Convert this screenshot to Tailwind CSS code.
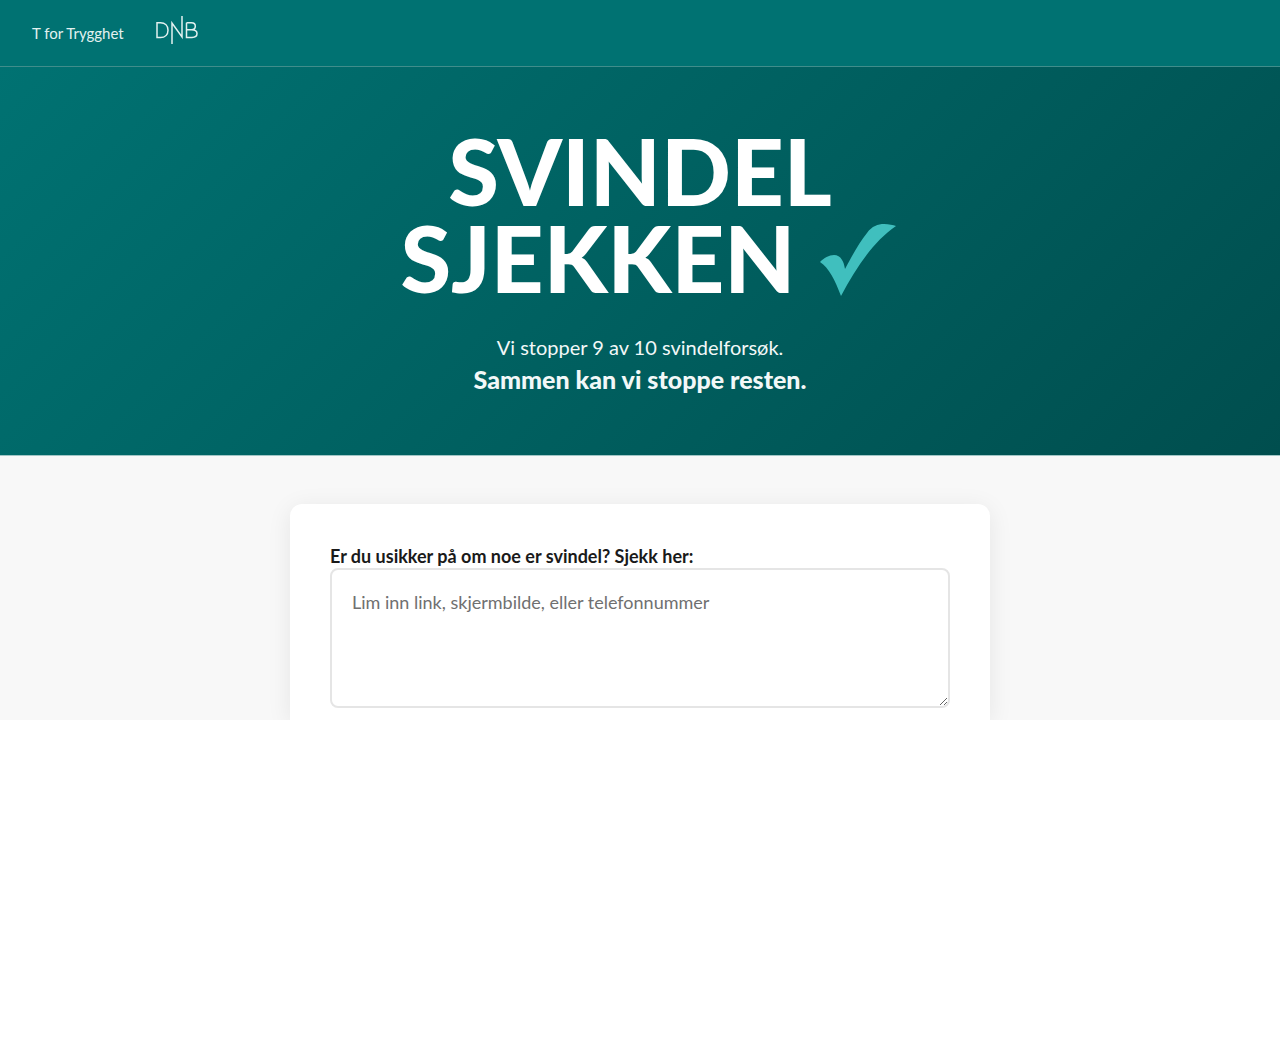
<!DOCTYPE html>
<html lang="nb">
<head>
<meta charset="utf-8">
<meta name="viewport" content="width=device-width, initial-scale=1">
<title>Svindelsjekken</title>
<script src="https://cdn.jsdelivr.net/npm/@tailwindcss/browser@4"></script>
</head>
<body class="bg-white font-['Lato',sans-serif] text-[#1a1a1a]">
<header class="flex h-[67px] items-center gap-8 border-b border-[#408d8b] bg-[#007272] px-8 text-[#e2f1f0]">
  <span class="text-[15px] leading-6">T for Trygghet</span>
  <a href="#" aria-label="DNB" class="mb-1.5">
    <svg class="h-7 w-[42px]" viewBox="0 0 42 28" fill="none" stroke="currentColor" stroke-width="1.5">
      <path d="M1 6.8H4.5C9 6.8 12 9.800 12 14.200S9 21.500 4.500 21.500H1Z"/>
      <path d="M16 28V7L26 21V0"/>
      <path d="M30.500 6.800H35.500C38 6.800 39.300 8.300 39.300 10.200S38 13.700 35.500 13.700H30.500M35.500 13.700C39 13.700 41 15.200 41 17.600S39 21.500 36 21.500H30.500V6.800"/>
    </svg>
  </a>
</header>
<section class="border-b border-[#a1c6c6] bg-linear-[135deg,#007272,#004e4e] px-6 py-15 text-center text-[#f2f8f8]">
  <h1 class="flex flex-col items-center text-[92px] leading-[87px] font-black text-white">
    <span>SVINDEL</span>
    <span class="flex items-center justify-center gap-6 pl-4">SJEKKEN
      <svg class="mt-1 h-[72px] w-[76px]" viewBox="0 0 76 72" fill="#40bfbe" aria-hidden="true">
        <path d="M0 38C4 34 9 31 14 31C21 31 24 38 25 45C33 30 39 19 47 9C52 2 58 0 64 0C69 0 73 1 76 2C54 17 37 42 21 72C15 56 9 44 0 38Z"/>
      </svg>
    </span>
  </h1>
  <p class="mt-[30px] text-xl leading-8">Vi stopper 9 av 10 svindelforsøk.</p>
  <p class="text-[25px] leading-8 font-black">Sammen kan vi stoppe resten.</p>
</section>
<main class="overflow-hidden bg-[#f8f8f8] pt-12">
  <form class="mx-auto w-full max-w-[700px] rounded-t-xl bg-white px-10 pt-10 pb-3 shadow-[0_4px_24px_#00000014]">
    <label for="query" class="block text-lg leading-6 font-bold">Er du usikker på om noe er svindel? Sjekk her:</label>
    <textarea id="query" placeholder="Lim inn link, skjermbilde, eller telefonnummer" class="block h-[140px] w-full resize-y rounded-lg border-2 border-[#e5e5e5] bg-white p-5 text-lg leading-6 placeholder:text-[#707070]"></textarea>
  </form>
</main>
</body>
</html>
